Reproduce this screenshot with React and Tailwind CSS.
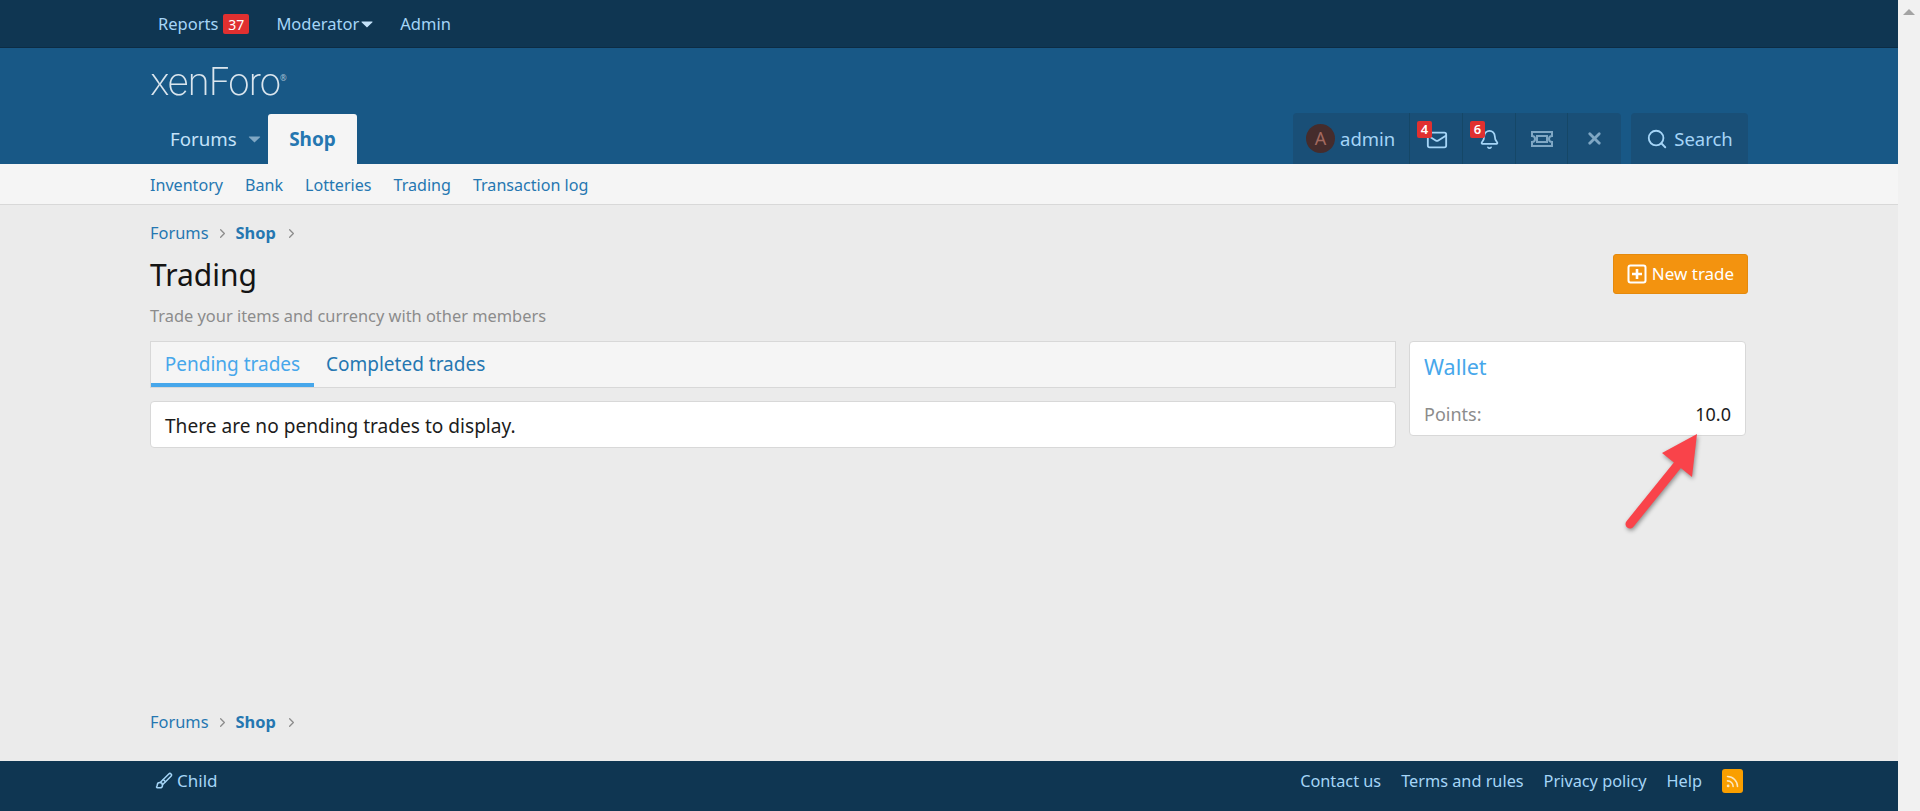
import React from 'react';
import { Mail, Bell, Search, X, ChevronRight, Brush, Rss } from 'lucide-react';

const Caret = ({ className }) => (
  <svg viewBox="0 0 14 8" className={className}>
    <path d="M1 0.5h12a.5.5 0 0 1 .35.85L7 7.5.65 1.35A.5.5 0 0 1 1 .5z" fill="currentColor" />
  </svg>
);

const TicketIcon = () => (
  <svg viewBox="0 0 24 16" className="w-[24px] h-[16px]" fill="none" stroke="currentColor" strokeWidth="2">
    <path d="M2 1h20v4a3 3 0 0 0 0 6v4H2v-4a3 3 0 0 0 0-6z" />
    <rect x="7" y="5" width="10" height="6" />
  </svg>
);

const PlusBox = () => (
  <svg viewBox="0 0 20 20" className="w-[20px] h-[20px]" fill="none" stroke="currentColor" strokeWidth="2">
    <rect x="1.5" y="1.5" width="17" height="17" rx="2" />
    <path d="M10 5v10M5 10h10" strokeWidth="2.6" />
  </svg>
);

const Breadcrumbs = ({ className }) => (
  <div className={`flex items-center text-[16.4px] h-[24px] text-[#2577b1] ${className}`}>
    <span>Forums</span>
    <ChevronRight size={15} strokeWidth={2} className="text-[#8c8c8c] mx-[6px]" />
    <span className="font-bold">Shop</span>
    <ChevronRight size={15} strokeWidth={2} className="text-[#8c8c8c] ml-[8px]" />
  </div>
);

const TopBar = () => (
  <div className="h-[48px] bg-[#0f3652] border-b border-[#0c2c44] pl-[158px] pt-[1px] flex items-center text-[16.5px] text-[#a5d5f7]">
    <span>Reports</span>
    <span className="ml-[5px] w-[26px] h-[20px] rounded-[2px] bg-[#e03030] text-white text-[14px] flex items-center justify-center">37</span>
    <span className="ml-[27px]">Moderator</span>
    <Caret className="w-[12px] h-[7px] ml-[2px] text-[#c4e2f9]" />
    <span className="ml-[27px]">Admin</span>
  </div>
);

const UserCell = ({ children, className = '' }) => (
  <div className={`relative h-full flex items-center justify-center border-r border-[#154767] last:border-r-0 ${className}`}>
    {children}
  </div>
);

const CountBadge = ({ children }) => (
  <span className="absolute left-[7px] top-[8px] w-[15px] h-[17px] rounded-[2px] bg-[#e03030] text-white text-[13px] font-semibold flex items-center justify-center">
    {children}
  </span>
);

const Header = () => (
  <div className="h-[116px] bg-[#185886] pl-[150px] pr-[150px] flex flex-col">
    <div className="h-[66px] pt-[12px] flex items-start">
      <span className="font-['Inter',sans-serif] font-extralight text-[38px] leading-[42px] tracking-[-1.5px] text-[#dbe6ee] blur-[0.6px]">xenForo</span>
      <span className="text-[#a9c1d3] text-[8px] mt-[12px]">®</span>
    </div>
    <div className="flex-1 flex justify-between items-end">
      <div className="flex items-end h-[50px]">
        <div className="w-[118px] h-full pl-[20px] flex items-center text-[18.7px] text-[#c4e2f9]">
          <span>Forums</span>
          <Caret className="w-[13px] h-[7px] ml-[11px] text-[#7fa7c4]" />
        </div>
        <div className="w-[89px] h-full rounded-t-[3px] bg-[#f5f5f5] flex items-center justify-center text-[19px] font-bold text-[#2577b1]">Shop</div>
      </div>
      <div className="flex h-[51px] text-[#a5d5f7] text-[18.5px] gap-[10px]">
        <div className="w-[328px] h-full flex rounded-t-[4px] bg-[#194f77]">
          <UserCell className="w-[117px] pl-[13px] !justify-start">
            <span className="w-[29px] h-[29px] rounded-full bg-[#452c2c] text-[#a3695f] text-[18px] flex items-center justify-center">A</span>
            <span className="ml-[5px]">admin</span>
          </UserCell>
          <UserCell className="w-[53px]">
            <CountBadge>4</CountBadge>
            <Mail size={22} strokeWidth={2} className="mt-[2px] ml-[2px]" />
          </UserCell>
          <UserCell className="w-[53px]">
            <CountBadge>6</CountBadge>
            <Bell size={21} strokeWidth={2} className="mt-[2px]" />
          </UserCell>
          <UserCell className="w-[52px] text-[#7fa7c4]">
            <TicketIcon />
          </UserCell>
          <UserCell className="flex-1 text-[#7fa7c4]">
            <X size={19} strokeWidth={3.5} />
          </UserCell>
        </div>
        <div className="w-[117px] flex items-center justify-center rounded-t-[4px] bg-[#194f77]">
          <Search size={22} strokeWidth={2} />
          <span className="ml-[6px]">Search</span>
        </div>
      </div>
    </div>
  </div>
);

const SubNav = () => (
  <div className="h-[41px] bg-[#f5f5f5] border-b border-[#d8d8d8] pl-[150px] pt-[2px] flex items-center gap-[22px] text-[16.1px] text-[#2577b1]">
    {['Inventory', 'Bank', 'Lotteries', 'Trading', 'Transaction log'].map((t) => (
      <span key={t}>{t}</span>
    ))}
  </div>
);

const Content = () => (
  <div className="flex-1 flex flex-col px-[150px] min-h-0">
    <Breadcrumbs className="mt-[16px]" />
    <div className="flex justify-between items-start mt-[9px]">
      <div>
        <h1 className="text-[30px] leading-[42px] text-[#141414]">Trading</h1>
        <p className="mt-[8px] text-[16.4px] leading-[24px] text-[#8c8c8c]">Trade your items and currency with other members</p>
      </div>
      <button className="w-[135px] h-[40px] rounded-[3px] bg-[#f3930f] border border-[#e48a0e] text-white text-[17px] flex items-center justify-center">
        <PlusBox />
        <span className="ml-[5px]">New trade</span>
      </button>
    </div>
    <div className="flex gap-[13px] mt-[13px] items-start">
      <div className="w-[1246px]">
        <div className="h-[47px] bg-[#f5f5f5] border border-[#d8d8d8] flex items-stretch text-[19px] text-[#2577b1]">
          <div className="w-[163px] flex items-center justify-center pt-[4px] text-[#47a7eb] border-b-[4px] border-[#47a7eb]">Pending trades</div>
          <div className="ml-[12px] flex items-center">Completed trades</div>
        </div>
        <div className="mt-[13px] h-[47px] rounded-[4px] bg-white border border-[#d8d8d8] pl-[14px] pt-[3px] flex items-center text-[19.1px] text-[#1c1c1c]">
          There are no pending trades to display.
        </div>
      </div>
      <div className="w-[337px] h-[95px] rounded-[4px] bg-white border border-[#d8d8d8] px-[14px] pt-[11px]">
        <div className="text-[21.5px] leading-[28px] text-[#47a7eb]">Wallet</div>
        <div className="mt-[21px] flex justify-between text-[18px] leading-[24px]">
          <span className="text-[#8c8c8c]">Points:</span>
          <span className="text-[#1c1c1c]">10.0</span>
        </div>
      </div>
    </div>
    <Breadcrumbs className="mt-auto mb-[27px]" />
  </div>
);

const Footer = () => (
  <div className="h-[50px] bg-[#0f3652] pl-[155px] pr-[155px] pb-[10px] flex items-center justify-between text-[16.3px] text-[#a5d5f7]">
    <div className="flex items-center">
      <Brush size={18} strokeWidth={2} />
      <span className="ml-[4px] text-[17px]">Child</span>
    </div>
    <div className="flex items-center gap-[20px]">
      <span>Contact us</span>
      <span>Terms and rules</span>
      <span>Privacy policy</span>
      <span>Help</span>
      <span className="w-[21px] h-[24px] rounded-[3px] bg-[#fa9f00] text-[#fde7c0] flex items-center justify-center">
        <Rss size={15} strokeWidth={2.5} />
      </span>
    </div>
  </div>
);

const Scrollbar = () => (
  <div className="w-[22px] bg-[#f1f1f1] flex justify-center pt-[9px]">
    <div className="w-0 h-0 border-x-[6px] border-x-transparent border-b-[6px] border-b-[#a3a3a3]" />
  </div>
);

const Arrow = () => (
  <svg className="absolute left-[1610px] top-[425px] w-[100px] h-[115px] drop-shadow-[1px_2px_2px_rgba(0,0,0,0.4)]" viewBox="0 0 100 115">
    <path d="M20 99L70 37" stroke="#f9434a" strokeWidth="9" strokeLinecap="round" />
    <path d="M87 9L52 28L82 52z" fill="#f9434a" />
  </svg>
);

export default function App() {
  return (
    <div className="relative h-[811px] w-full overflow-hidden flex font-['Noto_Sans',sans-serif] bg-[#ebebeb]">
      <div className="flex-1 min-w-0 flex flex-col">
        <TopBar />
        <Header />
        <SubNav />
        <Content />
        <Footer />
      </div>
      <Scrollbar />
      <Arrow />
    </div>
  );
}
